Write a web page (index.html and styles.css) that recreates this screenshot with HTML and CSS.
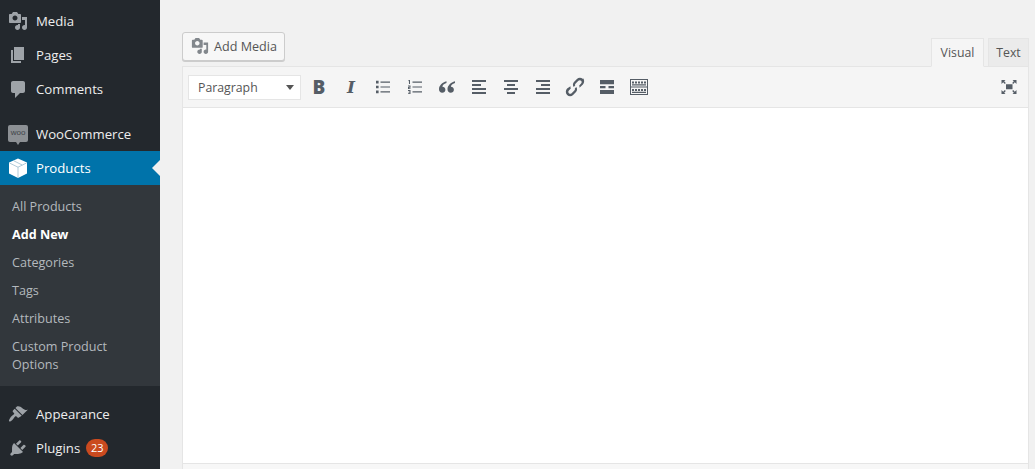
FILE: index.html
```html
<!DOCTYPE html>
<html lang="en">
<head>
<meta charset="utf-8">
<title>Add New Product</title>
<link rel="stylesheet" href="styles.css">
</head>
<body>
<div class="page">
  <nav class="sidebar">
    <ul class="menu first">
      <li class="item"><svg class="mi" viewBox="0 0 20 20"><path d="M13 11V4c0-.55-.45-1-1-1h-1.67L9 1H5L3.67 3H2c-.55 0-1 .45-1 1v7c0 .55.45 1 1 1h10c.55 0 1-.45 1-1zM7 4.5c1.38 0 2.5 1.12 2.5 2.5S8.38 9.5 7 9.5 4.5 8.38 4.5 7 5.62 4.5 7 4.5zM14 6h5v10.5c0 1.38-1.12 2.5-2.5 2.5S14 17.88 14 16.5s1.12-2.5 2.5-2.5c.17 0 .34.02.5.05V9h-3V6zm-4 8.05V13h2v3.5c0 1.38-1.12 2.5-2.5 2.5S7 17.88 7 16.5 8.12 14 9.5 14c.17 0 .34.02.5.05z"/></svg><span>Media</span></li>
      <li class="item"><svg class="mi" viewBox="0 0 20 20"><path d="M6 15V2h10v13H6zm-1 1h8v2H3V5h2v11z"/></svg><span>Pages</span></li>
      <li class="item"><svg class="mi" viewBox="0 0 20 20"><path d="M5 2h10c1.1 0 2 .9 2 2v8c0 1.1-.9 2-2 2h-3l-5 5v-5H5c-1.1 0-2-.9-2-2V4c0-1.1.9-2 2-2z"/></svg><span>Comments</span></li>
    </ul>
    <ul class="menu sep">
      <li class="item"><span class="woo">woo</span><span>WooCommerce</span></li>
      <li class="item current"><svg class="mi cube" viewBox="0 0 20 20"><path d="M10 .4l9 4.200v10.800L10 20l-9-4.600V4.600z"/><path class="cube-line" d="M1.500 5l8.500 4.200L18.500 5M10 9.200V20M5.800 2.800l8.400 4.200"/></svg><span>Products</span></li>
    </ul>
    <ul class="sub">
      <li class="sub-item">All Products</li>
      <li class="sub-item active">Add New</li>
      <li class="sub-item">Categories</li>
      <li class="sub-item">Tags</li>
      <li class="sub-item">Attributes</li>
      <li class="sub-item">Custom Product Options</li>
    </ul>
    <ul class="menu sep">
      <li class="item"><svg class="mi" viewBox="0 0 20 20"><path d="M14.48 11.06L7.41 3.99l1.5-1.5c.5-.56 2.3-.47 3.51.32 1.21.8 1.43 1.28 2.91 2.1 1.18.64 2.45 1.26 4.45.85zm-.71.71L6.7 4.7 4.93 6.47c-.39.39-.39 1.02 0 1.41l1.06 1.06c.39.39.39 1.03 0 1.42-.6.6-1.43 1.11-2.21 1.69-.35.26-.7.53-1.01.84C1.43 15.23.5 16.6 1.17 17.27c.67.66 2.04-.27 3.38-1.6.31-.31.58-.66.84-1.01.58-.78 1.09-1.61 1.69-2.21.39-.39 1.03-.39 1.42 0l1.06 1.06c.39.39 1.02.39 1.41 0z"/></svg><span>Appearance</span></li>
      <li class="item"><svg class="mi" viewBox="0 0 20 20"><path d="M13.11 4.36L9.87 7.6 8 5.73l3.24-3.24c.35-.34 1.05-.2 1.56.32.52.51.66 1.21.31 1.55zm-8 1.77l.91-1.12 9.01 9.01-1.19.84c-.71.71-2.63 1.16-3.82 1.16H6.14L4.9 17.26c-.59.59-1.54.59-2.12 0-.59-.58-.59-1.53 0-2.12l1.24-1.24v-3.88c0-1.13.4-3.19 1.09-3.89zm7.26 3.97l3.24-3.24c.34-.35 1.04-.21 1.55.31.52.51.66 1.21.31 1.55l-3.24 3.25z"/></svg><span>Plugins</span><span class="badge">23</span></li>
    </ul>
  </nav>
  <main class="content">
    <div class="editor-head">
      <button class="media-btn" type="button"><svg class="btn-icon" viewBox="0 0 20 20"><path d="M13 11V4c0-.55-.45-1-1-1h-1.67L9 1H5L3.67 3H2c-.55 0-1 .45-1 1v7c0 .55.45 1 1 1h10c.55 0 1-.45 1-1zM7 4.5c1.38 0 2.5 1.12 2.5 2.5S8.38 9.5 7 9.5 4.5 8.38 4.5 7 5.62 4.5 7 4.5zM14 6h5v10.5c0 1.38-1.12 2.5-2.5 2.5S14 17.88 14 16.5s1.12-2.5 2.5-2.5c.17 0 .34.02.5.05V9h-3V6zm-4 8.05V13h2v3.5c0 1.38-1.12 2.5-2.5 2.5S7 17.88 7 16.5 8.12 14 9.5 14c.17 0 .34.02.5.05z"/></svg>Add Media</button>
      <div class="tabs">
        <div class="tab on">Visual</div>
        <div class="tab off">Text</div>
      </div>
    </div>
    <div class="editor">
      <div class="toolbar">
        <div class="select"><span>Paragraph</span><i class="caret"></i></div>
        <span class="tool glyph bold">B</span>
        <span class="tool glyph ital">I</span>
        <span class="tool"><svg viewBox="0 0 20 20"><path d="M3 3.800h2.600v2.600H3zM3 8.700h2.600v2.600H3zM3 13.600h2.600v2.600H3zM7.500 4.500H17v1.200H7.500zM7.500 9.400H17v1.200H7.500zM7.500 14.300H17v1.200H7.500z"/></svg></span>
        <span class="tool"><svg viewBox="0 0 20 20"><path d="M7.500 4.500H17v1.200H7.500zM7.500 9.400H17v1.200H7.500zM7.500 14.300H17v1.200H7.500zM4 3h1v4H4l-.1-3H3zM3 8.500h2.500v2.200H4v.5h1.500v.8H3V9.800h1.500v-.5H3zM3 13h2.500v4H3v-.8h1.500v-.8H3.500v-.7h1v-.7H3z"/></svg></span>
        <span class="tool"><svg viewBox="0 0 20 20"><path d="M9.500 4.200C5.200 5.500 2 8.400 2 12.200c0 2.100 1.400 3.500 3.200 3.500 1.800 0 3.200-1.300 3.200-3 0-1.800-1.400-3-3-3 .2-1.500 1.500-2.900 4.100-3.700zM18 4.200c-4.300 1.300-7.500 4.200-7.500 8 0 2.100 1.400 3.500 3.200 3.500 1.800 0 3.200-1.300 3.200-3 0-1.800-1.400-3-3-3 .2-1.500 1.500-2.900 4.100-3.700z"/></svg></span>
        <span class="tool"><svg viewBox="0 0 20 20"><path d="M3 3h14v2H3zM3 7h9v2H3zM3 11h14v2H3zM3 15h14v2H3z"/></svg></span>
        <span class="tool"><svg viewBox="0 0 20 20"><path d="M3 3h14v2H3zM6 7h8v2H6zM3 11h14v2H3zM6 15h8v2H6z"/></svg></span>
        <span class="tool"><svg viewBox="0 0 20 20"><path d="M3 3h14v2H3zM8 7h9v2H8zM3 11h14v2H3zM3 15h14v2H3z"/></svg></span>
        <span class="tool"><svg viewBox="0 0 20 20"><path d="M17.900 2.100c-1.800-1.800-4.300-1.800-6 0L9.200 4.800c-1.600 1.600-1.600 3.700-.5 5.300l1.500-1.500c-.3-.7-.2-1.500.5-2.100l2.700-2.700c.8-.8 1.900-.8 2.700 0 .8.800.8 1.900 0 2.700l-1.900 1.900c.3.800.4 1.600.3 2.400l3.400-3.300c1.700-1.700 1.700-4.700 0-6.400zM2.100 17.900c1.800 1.800 4.300 1.800 6 0l2.700-2.700c1.600-1.600 1.600-3.700.5-5.300l-1.500 1.500c.3.700.2 1.500-.5 2.100l-2.700 2.700c-.8.800-1.900.8-2.700 0-.8-.8-.8-1.900 0-2.700l1.900-1.900c-.3-.8-.4-1.600-.3-2.400L2.100 11.500c-1.700 1.700-1.700 4.700 0 6.400z"/></svg></span>
        <span class="tool"><svg viewBox="0 0 20 20"><path d="M3 3h14v4.300H3zM3 9h5.500v2.300H3zM11.500 9H17v2.300h-5.500zM3 13h14v4H3z"/></svg></span>
        <span class="tool"><svg viewBox="0 0 20 20"><path fill-rule="evenodd" d="M1 2h18v16H1zM2 3v6.500h16V3zM2 10.500V17h16v-6.500zM3 4.500h2v2H3zM6 4.500h2v2H6zM9 4.500h2v2H9zM12 4.500h2v2h-2zM15 4.500h2v2h-2zM3 7.300h14v1.200H3zM3 12h2v2H3zM6 12h2v2H6zM9 12h2v2H9zM12 12h2v2h-2zM15 12h2v2h-2zM3 14.800h14V16H3z"/></svg></span>
        <span class="tool full"><svg viewBox="0 0 20 20"><path d="M7 7.200h6.500v5H7zM2.500 3h4L5.200 4.300 6.800 5.900 5.800 6.900 4.200 5.300 2.500 7zM17.500 3v4l-1.700-1.700-1.600 1.600-1-1 1.600-1.600L13.500 3zM2.500 17v-4l1.700 1.700 1.600-1.600 1 1-1.600 1.600L6.500 17zM17.500 17h-4l1.300-1.300-1.600-1.600 1-1 1.600 1.600 1.700-1.700z"/></svg></span>
      </div>
      <div class="canvas"></div>
      <div class="status"></div>
    </div>
  </main>
</div>
</body>
</html>
```

FILE: styles.css
```css
* { box-sizing: border-box; }
html, body { margin: 0; padding: 0; height: 100%; overflow: hidden; }
body { background: #f1f1f1; font-family: "Open Sans", "Liberation Sans", sans-serif; font-size: 13px; color: #444; }
ul { list-style: none; margin: 0; padding: 0; }
.page { display: flex; height: 469px; }

.sidebar { width: 160px; flex: none; background: #23282d; padding-top: 4px; height: 469px; overflow: hidden; }
.menu.sep { margin-top: 11px; }
.item { position: relative; display: flex; align-items: center; height: 34px; color: #eee; font-size: 13.2px; padding-left: 8px; }
.mi { width: 20px; height: 20px; fill: #9ea3a8; margin-right: 8px; flex: none; }
.item.current { background: #0073aa; color: #fff; }
.item.current::after { content: ""; position: absolute; right: 0; top: 9px; border: 8px solid transparent; border-right-color: #f1f1f1; border-left: 0; }
.cube { fill: #fff; }
.cube-line { fill: none; stroke: #8fb4c8; stroke-width: .7; }
.woo { position: relative; width: 20px; height: 17px; margin-right: 8px; margin-top: -2px; background: #8c9094; border-radius: 2px; color: #3f4449; font: 8px/16px "Liberation Sans", sans-serif; text-align: center; flex: none; }
.woo::after { content: ""; position: absolute; left: 8px; bottom: -3px; border: 2px solid transparent; border-top: 3px solid #8c9094; border-bottom: 0; }
.badge { margin-left: 6px; min-width: 22px; height: 18px; border-radius: 9px; background: #ca4a1f; color: #fff; font-size: 11px; line-height: 18px; text-align: center; }

.sub { background: #32373c; padding: 8px 0 7px; }
.sub-item { padding: 5px 12px; color: #b4b9be; font-size: 12.6px; line-height: 18px; }
.sub-item.active { color: #fff; font-weight: 700; }

.content { flex: 1; padding: 32px 6px 0 22px; min-width: 0; }
.editor-head { display: flex; justify-content: space-between; align-items: flex-end; height: 34px; }
.media-btn { align-self: flex-start; display: flex; align-items: center; height: 29px; width: 103px; padding: 0 0 1px 8px; background: #f7f7f7; border: 1px solid #ccc; border-radius: 3px; box-shadow: 0 1px 0 #ccc; color: #555; font: 12.6px "Open Sans", "Liberation Sans", sans-serif; }
.btn-icon { width: 18px; height: 18px; fill: #82878c; margin-right: 5px; flex: none; }
.tabs { display: flex; gap: 4px; margin-bottom: -1px; position: relative; z-index: 1; }
.tab { height: 29px; line-height: 28px; text-align: center; background: #ebebeb; border: 1px solid #e5e5e5; color: #555; font-size: 12.3px; }
.tab.on { width: 53px; background: #f5f5f5; border-bottom-color: #f5f5f5; }
.tab.off { width: 41px; }

.editor { border: 1px solid #e5e5e5; border-bottom: 0; background: #fff; }
.toolbar { display: flex; align-items: center; height: 41px; padding: 0 5px; gap: 4px; background: #f5f5f5; border-bottom: 1px solid #e5e5e5; }
.select { display: flex; align-items: center; justify-content: space-between; width: 113px; height: 25px; padding: 0 9px; background: #fff; border: 1px solid #e5e5e5; color: #555; font-size: 12.3px; }
.caret { border: 4px solid transparent; border-top: 5px solid #555; border-bottom: 0; margin-right: -3px; }
.tool { display: flex; align-items: center; justify-content: center; width: 28px; height: 28px; color: #555d66; }
.tool svg { width: 20px; height: 20px; fill: #555d66; }
.bold { font-family: "Open Sans", sans-serif; font-weight: 800; font-size: 19px; }
.ital { font-family: "DejaVu Serif", serif; font-weight: 700; font-style: italic; font-size: 17px; }
.full { margin-left: auto; }
.canvas { height: 355px; background: #fff; }
.status { height: 12px; background: #f7f7f7; border-top: 1px solid #e5e5e5; }
```
